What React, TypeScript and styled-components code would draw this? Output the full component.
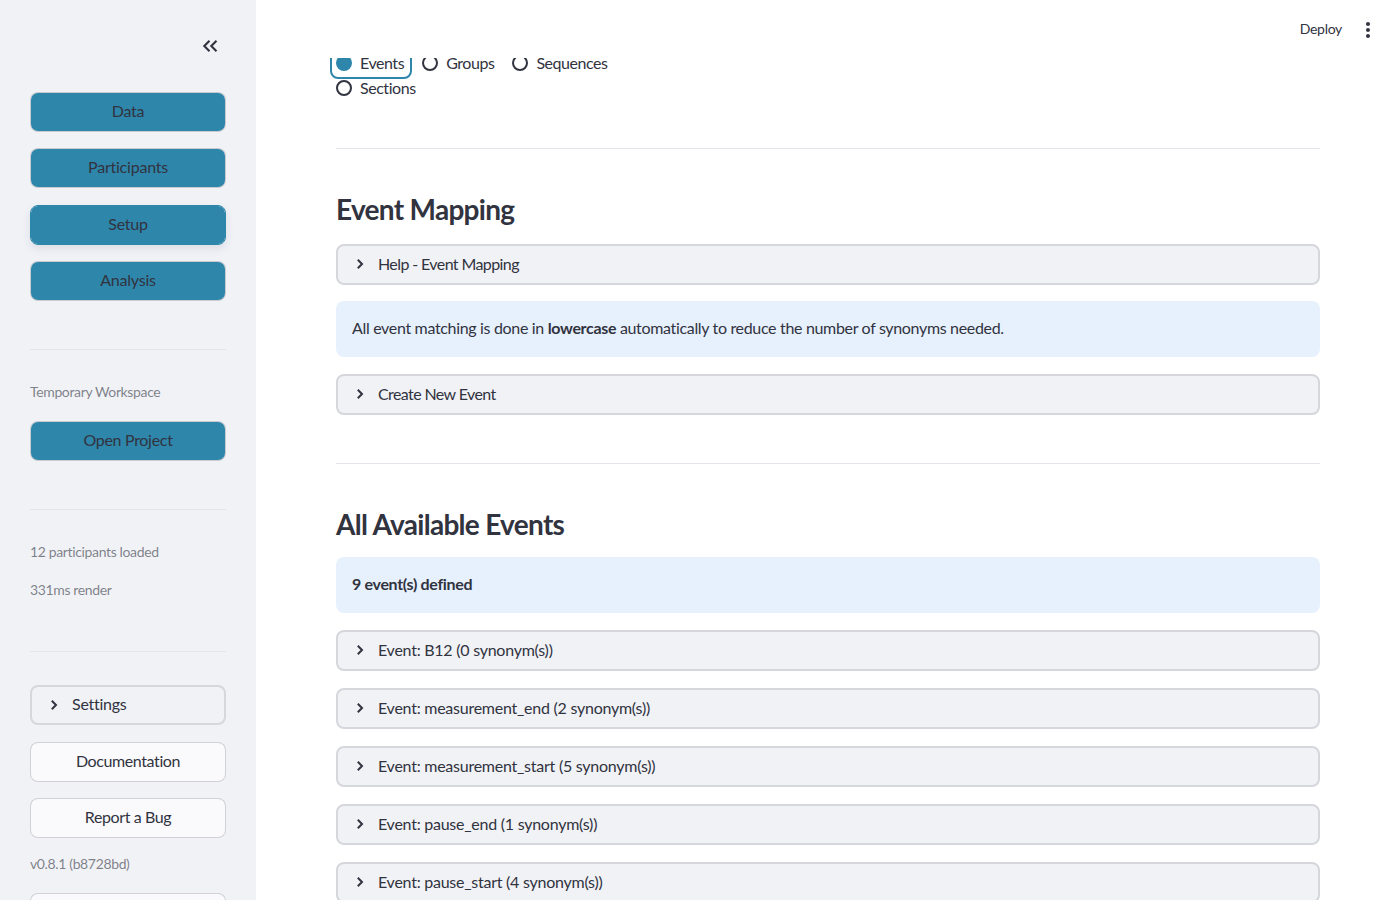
import React from 'react';
import styled, { createGlobalStyle } from 'styled-components';
import { MdMoreVert } from 'react-icons/md';

const GlobalStyle = createGlobalStyle`
	html, body {
		margin: 0;
		height: 100%;
		overflow: hidden;
		background: #fff;
	}
	body {
		font-family: Lato, 'Noto Sans', sans-serif;
		font-size: 16px;
		letter-spacing: -0.22px;
		color: #31333f;
	}
	* {
		box-sizing: border-box;
	}
`;

const expanders = [
	'Event: B12 (0 synonym(s))',
	'Event: measurement_end (2 synonym(s))',
	'Event: measurement_start (5 synonym(s))',
	'Event: pause_end (1 synonym(s))',
	'Event: pause_start (4 synonym(s))',
];

const Chevron = () => (
	<svg width="20" height="20" viewBox="0 0 20 20" fill="none" stroke="currentColor" strokeWidth="2">
		<polyline points="7.8,5.8 12,10 7.8,14.2" />
	</svg>
);

const CollapseIcon = () => (
	<svg width="24" height="24" viewBox="0 0 24 24" fill="none" stroke="currentColor" strokeWidth="2.1">
		<polyline points="11.5,6.8 6.3,12 11.5,17.2" />
		<polyline points="18.5,6.8 13.3,12 18.5,17.2" />
	</svg>
);

export default function App() {
	return (
		<>
			<GlobalStyle />
			<Page>
				<Sidebar>
					<CollapseRow>
						<CollapseIcon />
					</CollapseRow>
					<NavStack>
						<PrimaryButton>Data</PrimaryButton>
						<PrimaryButton>Participants</PrimaryButton>
						<PrimaryButton $hover>Setup</PrimaryButton>
						<PrimaryButton>Analysis</PrimaryButton>
					</NavStack>
					<SideDivider $top={48} />
					<Caption $top={33}>Temporary Workspace</Caption>
					<OpenProject>Open Project</OpenProject>
					<SideDivider $top={48} />
					<Caption $top={33}>12 participants loaded</Caption>
					<Caption $top={20}>331ms render</Caption>
					<SideDivider $top={52} />
					<SideExpander>
						<Chevron />
						<ExpanderLabel>Settings</ExpanderLabel>
					</SideExpander>
					<SecondaryButton $top={17}>Documentation</SecondaryButton>
					<SecondaryButton $top={16}>Report a Bug</SecondaryButton>
					<Caption $top={17}>v0.8.1 (b8728bd)</Caption>
					<SecondaryButton $top={20} />
				</Sidebar>
				<Main>
					<Header>
						<DeployLabel>Deploy</DeployLabel>
						<MdMoreVert size={24} />
					</Header>
					<Viewport>
						<Content>
							<RadioGroup>
								<RadioItem $focused>
									<RadioMark $checked />
									<span>Events</span>
								</RadioItem>
								<RadioItem>
									<RadioMark />
									<span>Groups</span>
								</RadioItem>
								<RadioItem>
									<RadioMark />
									<span>Sequences</span>
								</RadioItem>
								<RadioItem>
									<RadioMark />
									<span>Sections</span>
								</RadioItem>
							</RadioGroup>
							<MainDivider $top={48} />
							<Heading $top={40}>Event Mapping</Heading>
							<Expander $top={15}>
								<Chevron />
								<ExpanderLabel $tight>Help - Event Mapping</ExpanderLabel>
							</Expander>
							<InfoBox $top={16}>
								<span>
									All event matching is done in <strong>lowercase</strong> automatically to reduce the
									number of synonyms needed.
								</span>
							</InfoBox>
							<Expander $top={17}>
								<Chevron />
								<ExpanderLabel $tight>Create New Event</ExpanderLabel>
							</Expander>
							<MainDivider $top={48} />
							<Heading $top={40}>All Available Events</Heading>
							<InfoBox $top={13}>
								<strong>9 event(s) defined</strong>
							</InfoBox>
							{expanders.map((label) => (
								<Expander $top={17} key={label}>
									<Chevron />
									<ExpanderLabel>{label}</ExpanderLabel>
								</Expander>
							))}
						</Content>
					</Viewport>
				</Main>
			</Page>
		</>
	);
}

const Page = styled.div`
	display: flex;
	width: 1400px;
	height: 900px;
	overflow: hidden;
`;

const Sidebar = styled.aside`
	flex: 0 0 256px;
	height: 900px;
	overflow: hidden;
	padding: 0 30px;
	background: #f0f2f6;
	display: flex;
	flex-direction: column;
`;

const CollapseRow = styled.div`
	flex: 0 0 92px;
	padding: 34px 4px 0 0;
	display: flex;
	justify-content: flex-end;
	align-items: flex-start;
	color: #31333f;
`;

const NavStack = styled.div`
	display: flex;
	flex-direction: column;
	gap: 16.4px;
`;

const PrimaryButton = styled.div<{ $hover?: boolean }>`
	flex: none;
	height: 40px;
	padding-bottom: 3px;
	display: flex;
	align-items: center;
	justify-content: center;
	background: #2e86ab;
	background-clip: padding-box;
	border: 1px solid ${({ $hover }) => ($hover ? '#2e86ab' : 'rgba(49, 51, 63, 0.2)')};
	border-radius: 8px;
	color: #31333f;
	box-shadow: ${({ $hover }) => ($hover ? '0 4px 8px rgba(46, 60, 90, 0.1)' : 'none')};
`;

const OpenProject = styled(PrimaryButton)`
	margin-top: 20px;
	letter-spacing: -0.3px;
`;

const SideDivider = styled.hr<{ $top: number }>`
	flex: none;
	width: 100%;
	height: 1px;
	margin: ${({ $top }) => $top}px 0 0;
	border: 0;
	background: #e3e5ea;
`;

const Caption = styled.div<{ $top: number }>`
	flex: none;
	margin-top: ${({ $top }) => $top}px;
	font-size: 14px;
	line-height: 18px;
	letter-spacing: -0.36px;
	color: rgba(49, 51, 63, 0.6);
`;

const SideExpander = styled.div`
	flex: none;
	height: 40px;
	margin-top: 33px;
	padding: 0 0 1px 12px;
	display: flex;
	align-items: center;
	gap: 8px;
	border: 2px solid #d6d7dc;
	border-radius: 8px;
	background: #f0f2f6;
`;

const ExpanderLabel = styled.span<{ $tight?: boolean }>`
	padding-bottom: 2px;
	letter-spacing: ${({ $tight }) => ($tight ? '-0.6px' : '-0.25px')};
`;

const SecondaryButton = styled.div<{ $top: number }>`
	flex: none;
	height: 40px;
	margin-top: ${({ $top }) => $top}px;
	padding-bottom: 3px;
	display: flex;
	align-items: center;
	justify-content: center;
	background: #fafafc;
	border: 1px solid rgba(49, 51, 63, 0.2);
	border-radius: 8px;
	letter-spacing: -0.4px;
`;

const Main = styled.main`
	flex: 1;
	min-width: 0;
	height: 900px;
	display: flex;
	flex-direction: column;
	background: #fff;
`;

const Header = styled.header`
	flex: 0 0 58px;
	padding: 18px 20px 0 0;
	display: flex;
	justify-content: flex-end;
	align-items: flex-start;
	gap: 14px;
	color: #31333f;
`;

const DeployLabel = styled.span`
	font-size: 14px;
	line-height: 22px;
	letter-spacing: -0.3px;
`;

const Viewport = styled.div`
	flex: 1;
	min-height: 0;
	overflow: hidden;
	padding: 0 80px;
`;

/* the page is scrolled down a little: the radio row sits partly under the header */
const Content = styled.div`
	margin-top: -7px;
`;

const RadioGroup = styled.div`
	display: flex;
	flex-wrap: wrap;
	width: 300px;
	row-gap: 1px;
	column-gap: 18px;
	letter-spacing: -0.45px;
`;

const RadioItem = styled.div<{ $focused?: boolean }>`
	position: relative;
	height: 24px;
	display: flex;
	align-items: center;
	gap: 8px;
	line-height: 24px;

	${({ $focused }) =>
		$focused &&
		`
		&::after {
			content: '';
			position: absolute;
			inset: -6px -8px -4px -6px;
			border: 2px solid #2e86ab;
			border-radius: 8px;
		}
	`}
`;

const RadioMark = styled.span<{ $checked?: boolean }>`
	flex: none;
	width: 16px;
	height: 16px;
	border-radius: 50%;
	background: ${({ $checked }) => ($checked ? '#2e86ab' : 'transparent')};
	border: 2px solid ${({ $checked }) => ($checked ? '#2e86ab' : '#31333f')};
`;

const MainDivider = styled.hr<{ $top: number }>`
	width: 100%;
	height: 1px;
	margin: ${({ $top }) => $top}px 0 0;
	border: 0;
	background: #e3e5ea;
`;

const Heading = styled.h2<{ $top: number }>`
	margin: ${({ $top }) => $top}px 0 0;
	font-size: 28px;
	line-height: 40px;
	font-weight: 700;
	letter-spacing: -0.7px;
	color: #31333f;
`;

const Expander = styled.div<{ $top: number }>`
	height: 41px;
	margin-top: ${({ $top }) => $top}px;
	padding: 0 0 1px 12px;
	display: flex;
	align-items: center;
	gap: 8px;
	border: 2px solid #d6d7dc;
	border-radius: 8px;
	background: #f0f2f6;
`;

const InfoBox = styled.div<{ $top: number }>`
	height: 56px;
	margin-top: ${({ $top }) => $top}px;
	padding: 0 16px 3px;
	display: flex;
	align-items: center;
	border-radius: 8px;
	background: #e7f1fd;
	color: #31333f;
	letter-spacing: -0.33px;
`;
